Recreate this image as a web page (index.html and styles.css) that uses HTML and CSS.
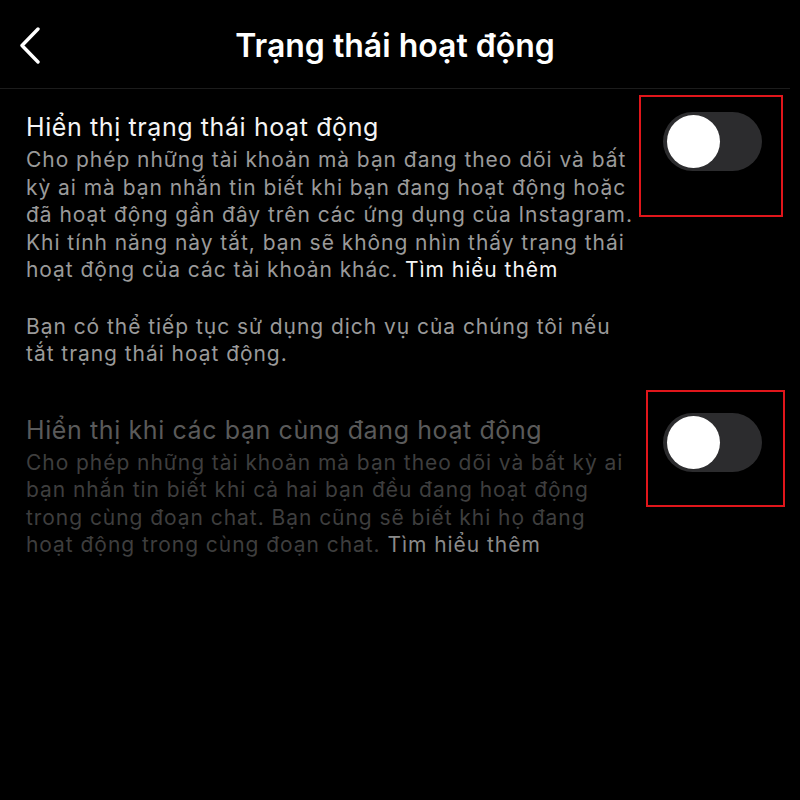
FILE: index.html
```html
<!DOCTYPE html>
<html lang="vi">
<head>
<meta charset="utf-8">
<title>Trạng thái hoạt động</title>
<link rel="stylesheet" href="styles.css">
</head>
<body>
<div class="screen">
  <header class="topbar">
    <svg class="back" width="30" height="44" viewBox="0 0 30 44" aria-hidden="true">
      <polyline points="18,6 2,22.5 18,39" fill="none" stroke="#fff" stroke-width="3.4" stroke-linecap="round" stroke-linejoin="round"/>
    </svg>
    <h1 class="title">Trạng thái hoạt động</h1>
  </header>

  <section class="setting setting-one">
    <div class="text">
      <h2 class="name">Hiển thị trạng thái hoạt động</h2>
      <p class="desc">Cho phép những tài khoản mà bạn đang theo dõi và bất<br>kỳ ai mà bạn nhắn tin biết khi bạn đang hoạt động hoặc<br>đã hoạt động gần đây trên các ứng dụng của Instagram.<br>Khi tính năng này tắt, bạn sẽ không nhìn thấy trạng thái<br>hoạt động của các tài khoản khác. <span class="link">Tìm hiểu thêm</span></p>
      <p class="desc note">Bạn có thể tiếp tục sử dụng dịch vụ của chúng tôi nếu<br>tắt trạng thái hoạt động.</p>
    </div>
    <div class="toggle"><span class="knob"></span></div>
    <span class="mark mark-one"></span>
  </section>

  <section class="setting setting-two disabled">
    <div class="text">
      <h2 class="name">Hiển thị khi các bạn cùng đang hoạt động</h2>
      <p class="desc">Cho phép những tài khoản mà bạn theo dõi và bất kỳ ai<br>bạn nhắn tin biết khi cả hai bạn đều đang hoạt động<br>trong cùng đoạn chat. Bạn cũng sẽ biết khi họ đang<br>hoạt động trong cùng đoạn chat. <span class="link">Tìm hiểu thêm</span></p>
    </div>
    <div class="toggle"><span class="knob"></span></div>
    <span class="mark mark-two"></span>
  </section>
</div>
</body>
</html>
```

FILE: styles.css
```css
html, body {
  margin: 0;
  padding: 0;
  background: #000;
}

.screen {
  width: 800px;
  height: 800px;
  background: #000;
  font-family: Inter, "Noto Sans", "DejaVu Sans", sans-serif;
  color: #f5f5f5;
  overflow: hidden;
}

.topbar {
  position: relative;
  height: 88px;
  display: flex;
  align-items: center;
  justify-content: center;
  border-bottom: 1px solid #1c1c1c;
  margin-right: 10px;
}

.back {
  position: absolute;
  left: 20px;
  top: 23px;
}

.title {
  margin: 0;
  font-size: 32px;
  font-weight: 600;
  letter-spacing: 0;
  color: #fff;
  padding-top: 2px;
}

.setting {
  position: relative;
  display: flex;
  align-items: flex-start;
  padding-left: 26px;
}

.setting-one {
  margin-top: 24px;
}

.setting-two {
  margin-top: 48px;
}

.text {
  width: 637px;
}

.name {
  margin: 0;
  font-size: 25px;
  font-weight: 400;
  letter-spacing: 0.6px;
  line-height: 29px;
  color: #f5f5f5;
}

.desc {
  margin: 4px 0 0;
  font-size: 21px;
  letter-spacing: 0.95px;
  line-height: 27.5px;
  color: #9a9a9a;
}

.note {
  margin-top: 29px;
}

.link {
  color: #f5f5f5;
}

.disabled .name {
  color: #5a5a5a;
}

.disabled .desc {
  color: #3e3e3e;
}

.disabled .link {
  color: #8a8a8a;
}

.toggle {
  position: relative;
  width: 99px;
  height: 59px;
  border-radius: 30px;
  background: #2c2c2e;
  flex: none;
}

.setting-one .toggle {
  margin-top: -1px;
}

.setting-two .toggle {
  margin-top: -3px;
}

.knob {
  position: absolute;
  left: 4px;
  top: 3px;
  width: 53px;
  height: 53px;
  border-radius: 50%;
  background: #fff;
}

.mark {
  position: absolute;
  border: 2px solid #e0161b;
  pointer-events: none;
}

.mark-one {
  left: 639px;
  top: -18px;
  width: 140px;
  height: 118px;
}

.mark-two {
  left: 646px;
  top: -26px;
  width: 135px;
  height: 113px;
}
```
